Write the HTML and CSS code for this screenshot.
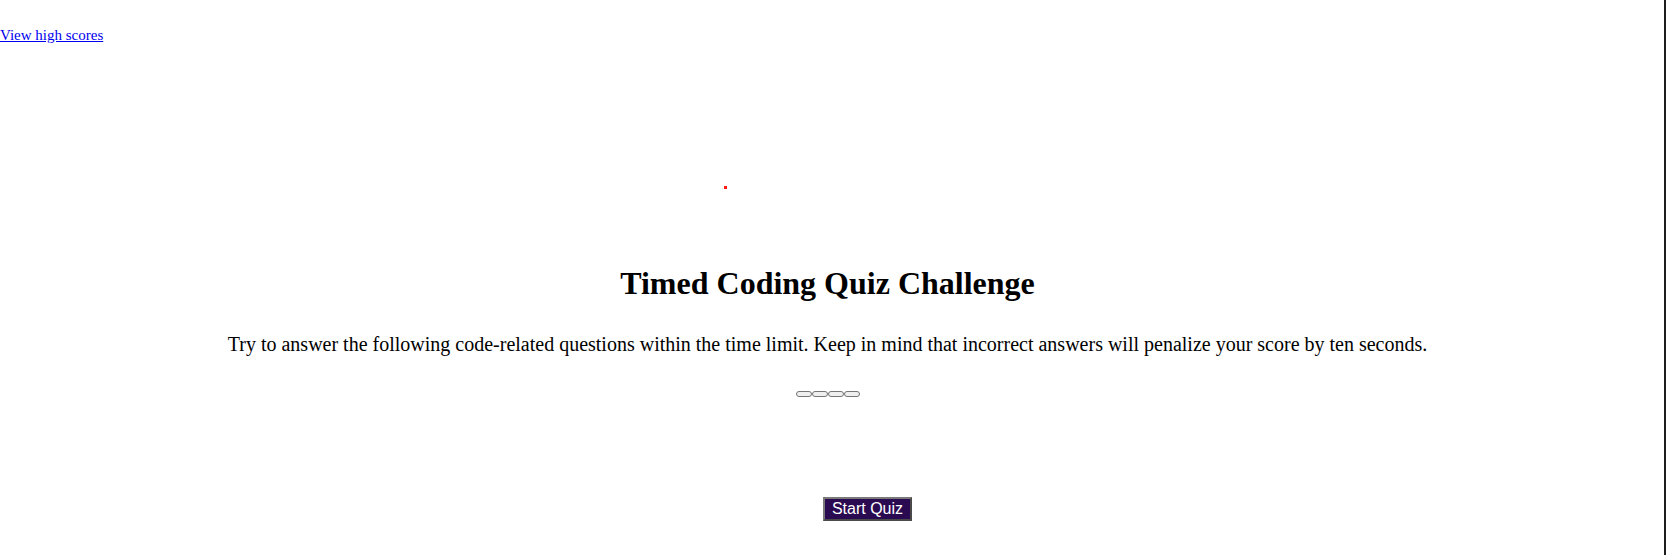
FILE: index.html
```html
<!DOCTYPE html>
<html lang="en">
<head>
<meta charset="utf-8">
<title>Timed Coding Quiz</title>
<link rel="stylesheet" href="styles.css">
</head>
<body>
<div class="page">
  <header class="top">
    <a class="scores-link" href="#">View high scores</a>
  </header>
  <div class="timer"></div>
  <main class="intro">
    <h1 class="title">Timed Coding Quiz Challenge</h1>
    <p class="lead">Try to answer the following code-related questions within the time limit. Keep in mind that incorrect answers will penalize your score by ten seconds.</p>
    <div class="choices">
      <button class="choice" type="button"></button><button class="choice" type="button"></button><button class="choice" type="button"></button><button class="choice" type="button"></button>
    </div>
    <div class="actions">
      <button class="start" type="button">Start Quiz</button>
    </div>
  </main>
</div>
</body>
</html>
```

FILE: styles.css
```css
html, body {
  margin: 0;
  padding: 0;
  background: #ffffff;
}

body {
  font-family: "Liberation Serif", "Times New Roman", serif;
  font-size: 16px;
  color: #000;
}

.page {
  box-sizing: border-box;
  width: 1666px;
  min-height: 555px;
  border-right: 2px solid #1e1e1e;
  padding-right: 9px;
  display: flex;
  flex-direction: column;
}

.top {
  padding-top: 26px;
  line-height: 18px;
  font-size: 15px;
}

.scores-link {
  color: #0000ee;
  text-decoration: underline;
}

.timer {
  width: 3px;
  height: 3px;
  background: #ff1a1a;
  margin-top: 142px;
  margin-left: 724px;
}

.intro {
  display: flex;
  flex-direction: column;
  align-items: center;
  text-align: center;
}

.title {
  margin: 76px 0 0;
  font-size: 32px;
  line-height: 36px;
  font-weight: bold;
}

.lead {
  margin: 32px 0 0;
  font-size: 20px;
  line-height: 22px;
}

.choices {
  margin-top: 36px;
  display: flex;
  height: 6px;
}

.choice {
  box-sizing: border-box;
  width: 16px;
  height: 6px;
  padding: 0;
  margin: 0;
  border: 1px solid #767676;
  border-radius: 3px;
  background: #efefef;
}

.actions {
  margin-top: 100px;
  display: flex;
  justify-content: center;
}

.start {
  margin-left: 80px;
  box-sizing: border-box;
  height: 24px;
  padding: 1px 7px;
  font-family: "Liberation Sans", Arial, sans-serif;
  font-size: 16px;
  line-height: 18px;
  color: #ffffff;
  background: #2a0a50;
  border: 2px solid;
  border-color: #7a7a7a #4a4a4a #4a4a4a #7a7a7a;
}
```
